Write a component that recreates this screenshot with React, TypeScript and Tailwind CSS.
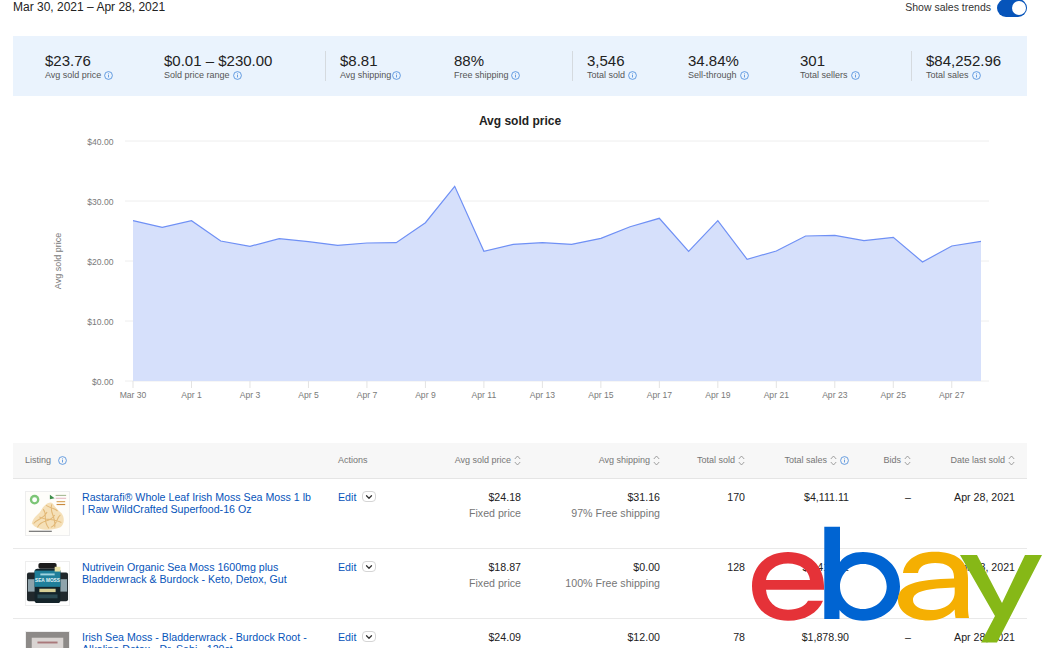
import React from 'react';
import { ChevronDown } from 'lucide-react';

const InfoIcon = ({ size = 10 }: { size?: number }) => (
  <svg width={size} height={size} viewBox="0 0 12 12" className="inline-block shrink-0" fill="none">
    <circle cx="6" cy="6" r="5.2" stroke="#3b82d8" strokeWidth="1" />
    <rect x="5.5" y="5" width="1" height="3.6" fill="#3b82d8" />
    <rect x="5.5" y="3.2" width="1" height="1" fill="#3b82d8" />
  </svg>
);

const SortIcon = () => (
  <svg width="7" height="11" viewBox="0 0 7 11" className="inline-block shrink-0" fill="none" stroke="#8a8a8a" strokeWidth="0.8">
    <path d="M0.8 4 L3.5 1 L6.2 4" />
    <path d="M0.8 7 L3.5 10 L6.2 7" />
  </svg>
);

const stats = [
  { value: '$23.76', label: 'Avg sold price', width: 'w-[119px]', gap: 'gap-[3px]' },
  { value: '$0.01 – $230.00', label: 'Sold price range', width: 'w-[176px]', gap: 'gap-[3px]' },
  { value: '$8.81', label: 'Avg shipping', width: 'w-[114px]', gap: 'gap-[1px]', divider: true },
  { value: '88%', label: 'Free shipping', width: 'w-[133px]', gap: 'gap-[2px]' },
  { value: '3,546', label: 'Total sold', width: 'w-[101px]', gap: 'gap-[3px]', divider: true },
  { value: '34.84%', label: 'Sell-through', width: 'w-[112px]', gap: 'gap-[3px]' },
  { value: '301', label: 'Total sellers', width: 'w-[126px]', gap: 'gap-[3px]' },
  { value: '$84,252.96', label: 'Total sales', width: 'w-[90px]', gap: 'gap-[3px]', divider: true },
];

const prices = [
  220.7, 227.3, 220.7, 241, 246.3, 238.7, 241.7, 245.3, 243, 242.7, 222.7, 186.3, 251.3, 244.3, 242.7,
  244.3, 238.3, 226.7, 218.3, 251.3, 220.7, 259.3, 251, 236, 235.3, 240.7, 237.3, 262, 246, 241.3,
];
const xAt = (i: number) => 133 + (i * 848) / 29;
const linePoints = prices.map((y, i) => `${xAt(i).toFixed(1)},${y}`).join(' ');
const xLabels = ['Mar 30', 'Apr 1', 'Apr 3', 'Apr 5', 'Apr 7', 'Apr 9', 'Apr 11', 'Apr 13', 'Apr 15', 'Apr 17', 'Apr 19', 'Apr 21', 'Apr 23', 'Apr 25', 'Apr 27'];
const yTicks = [
  { y: 141, label: '$40.00' },
  { y: 201, label: '$30.00' },
  { y: 261, label: '$20.00' },
  { y: 321, label: '$10.00' },
  { y: 381, label: '$0.00' },
];

const Chart = () => (
  <svg viewBox="0 96 1046 320" className="block h-[320px] w-[1046px]" fontFamily="'Liberation Sans', Arial, sans-serif">
    <text x="520" y="124.5" textAnchor="middle" fontSize="12" fontWeight="700" fill="#222">Avg sold price</text>
    {yTicks.map((t) => (
      <g key={t.label}>
        <line x1="125" x2="989" y1={t.y} y2={t.y} stroke="#eeeeee" strokeWidth="1" />
        <text x="113.5" y={t.y + 3.5} textAnchor="end" fontSize="8.6" fill="#7a7a7a">{t.label}</text>
      </g>
    ))}
    <polygon points={`133,381 ${linePoints} 981,381`} fill="#d6e0fb" />
    <polyline points={linePoints} fill="none" stroke="#6f90f5" strokeWidth="1.2" />
    {xLabels.map((label, i) => {
      const x = xAt(i * 2);
      return (
        <g key={label}>
          <line x1={x} x2={x} y1="381" y2="388" stroke="#e3e3e3" strokeWidth="1" />
          <text x={x} y="398" textAnchor="middle" fontSize="8.6" fill="#7a7a7a">{label}</text>
        </g>
      );
    })}
    <text transform="translate(61 261) rotate(-90)" textAnchor="middle" fontSize="9" fill="#7a7a7a">Avg sold price</text>
  </svg>
);

const MossThumb = () => (
  <svg viewBox="0 0 45 45" className="h-[45px] w-[45px] shrink-0 border border-[#eeeeee]">
    <rect width="45" height="45" fill="#fefdfa" />
    <circle cx="9" cy="8" r="5" fill="#7cc576" />
    <circle cx="9" cy="8" r="2.6" fill="#fff" />
    <path d="M25 3 L30 6.5 L25 7.5 Z" fill="#3e8d4a" />
    <rect x="31" y="3" width="11" height="1.2" fill="#a9bd98" />
    <rect x="31" y="6" width="11" height="1.2" fill="#e8bcc6" />
    <rect x="32" y="9.5" width="9" height="1.2" fill="#d9a65c" />
    <rect x="32" y="12.5" width="9" height="1.2" fill="#c98a3e" />
    <path d="M6 33 C8 25 14 24 17 17 C20 13 25 9 28 12 C31 16 33 19 37 22 C41 27 40 34 36 37 C27 41 12 41 6 33 Z" fill="#f5e0b8" />
    <path
      d="M8 33 C13 27 18 29 22 21 M12 37 C16 28 25 33 30 24 M18 18 C23 24 17 30 24 38 M27 13 C24 22 32 26 30 37 M36 24 C31 28 34 33 26 37 M14 26 C20 30 27 27 37 32 M21 14 C27 18 30 16 33 20"
      stroke="#e2b877"
      strokeWidth="1.1"
      fill="none"
    />
    <rect x="3" y="40.5" width="24" height="1.3" fill="#777" />
  </svg>
);

const BottleThumb = () => (
  <svg viewBox="0 0 45 45" className="h-[45px] w-[45px] shrink-0 border border-[#eeeeee]">
    <rect width="45" height="45" fill="#fff" />
    <rect x="1" y="11" width="11" height="30" rx="2" fill="#20282c" />
    <rect x="33" y="11" width="11" height="30" rx="2" fill="#20282c" />
    <rect x="2" y="18" width="9" height="13" fill="#8fa3ab" />
    <rect x="34" y="18" width="9" height="13" fill="#8fa3ab" />
    <rect x="13" y="1" width="19" height="6" rx="2" fill="#1c1c1c" />
    <rect x="9" y="7" width="27" height="36" rx="3" fill="#14242a" />
    <rect x="9" y="9" width="27" height="17" fill="#1f7f9a" />
    <text x="22.5" y="21" textAnchor="middle" fontSize="5" fontWeight="700" fill="#e4f4f7" fontFamily="'Liberation Sans', Arial, sans-serif">SEA MOSS</text>
    <rect x="15" y="12" width="15" height="2" fill="#9fd3df" />
    <rect x="14" y="28" width="17" height="3.5" fill="#d5cf95" />
    <rect x="12" y="34" width="21" height="4" fill="#2a4a52" />
    <rect x="30" y="5" width="6" height="5" fill="#e8e2a8" />
  </svg>
);

const SackThumb = () => (
  <svg viewBox="0 0 45 45" className="h-[45px] w-[45px] shrink-0 border border-[#eeeeee]">
    <rect width="45" height="45" fill="#8d8a88" />
    <rect x="6" y="6" width="33" height="39" fill="#d9d4d2" />
    <rect x="12" y="10" width="21" height="2" fill="#a9787a" />
  </svg>
);

const rows = [
  {
    thumb: <MossThumb />,
    title: 'Rastarafi® Whole Leaf Irish Moss Sea Moss 1 lb | Raw WildCrafted Superfood-16 Oz',
    price: '$24.18',
    shipping: '$31.16',
    free: '97% Free shipping',
    sold: '170',
    sales: '$4,111.11',
    date: 'Apr 28, 2021',
  },
  {
    thumb: <BottleThumb />,
    title: 'Nutrivein Organic Sea Moss 1600mg plus Bladderwrack & Burdock - Keto, Detox, Gut',
    price: '$18.87',
    shipping: '$0.00',
    free: '100% Free shipping',
    sold: '128',
    sales: '$3,411.12',
    date: 'Apr 28, 2021',
  },
  {
    thumb: <SackThumb />,
    title: 'Irish Sea Moss - Bladderwrack - Burdock Root - Alkaline Detox - Dr. Sebi - 120ct',
    price: '$24.09',
    shipping: '$12.00',
    free: '0% Free shipping',
    sold: '78',
    sales: '$1,878.90',
    date: 'Apr 28, 2021',
  },
];

const gridCols = 'grid grid-cols-[325px_92px_91px_139px_85px_104px_62px_104px] pr-[12px]';

const EbayLogo = () => (
  <svg viewBox="752 526 290 117" className="absolute left-[752px] top-[526px] h-[117px] w-[290px]">
    <path
      fillRule="evenodd"
      fill="#e53238"
      d="M824 589.7 V586 C824 566 810 552 788 552 C766 552 752 567 752 586 C752 606 766 620.7 788 620.7 C805 620.7 818 613 823 600.7 H808 C805 606 798 609.7 788 609.7 C775 609.7 767 601 766 589.7 Z M766 580 C767 571 776 563.5 788 563.5 C800 563.5 809 570 810 580 Z"
    />
    <path
      fillRule="evenodd"
      fill="#0064d2"
      d="M824.3 526.7 H840 V562 C845 555 853 552 863 552 C885 552 900 567 900 586.5 C900 606 885 620.7 863 620.7 C853 620.7 845 617 839.5 610 V619 H824.3 Z M863 564 C850 564 840 574 840 586.5 C840 599 850 609 863 609 C876 609 886.7 599 886.7 586.5 C886.7 574 876 564 863 564 Z"
    />
    <path
      fillRule="evenodd"
      fill="#f5af02"
      d="M903 573 C905 559 918 551.7 935 551.7 C956 551.7 968 561 968 578 V608 C968 612 968.5 615 969 618 H955.5 C955 615 954.7 612 954.7 609.5 C949 616 940 620.5 929 620.5 C911 620.5 898 612 898 600 C898 584 916 579.5 954 578.5 V577 C954 567.5 947 563 935 563 C925 563 919 566.5 918 573 Z M954.7 587.5 C928 588.5 913 591 913 600 C913 606 920 610 931 610 C945 610 954.7 603 954.7 592 Z"
    />
    <path fill="#86b817" d="M960 555 H977 L1002 603 L1025 555 H1042 L997 642.5 H981 L995 616 Z" />
  </svg>
);

export default function App() {
  return (
    <div className="relative h-[648px] w-[1046px] overflow-hidden bg-white font-['Liberation_Sans',Arial,sans-serif] text-[#222]">
      <div className="flex h-[36px] items-start justify-between pl-[13px] pr-[19px]">
        <span className="text-[12px] leading-[15px]">Mar 30, 2021 – Apr 28, 2021</span>
        <div className="flex items-start gap-[6px]">
          <span className="text-[10.5px] leading-[15px] text-[#333]">Show sales trends</span>
          <div className="mt-[-1px] flex h-[18px] w-[30px] items-center justify-end rounded-full bg-[#0654ba] pr-[1.5px]">
            <div className="h-[14px] w-[14px] rounded-full bg-white" />
          </div>
        </div>
      </div>

      <div className="mx-[13px] flex h-[60px] w-[1014px] items-center bg-[#eaf3fd] pl-[32px]">
        {stats.map((s) => (
          <div key={s.label} className={`flex h-[30px] items-center ${s.width}`}>
            {s.divider && <div className="ml-[-15px] mr-[14px] h-[30px] w-px bg-[#d5dadf]" />}
            <div>
              <div className="text-[15px] leading-[17px] text-[#222]">{s.value}</div>
              <div className={`mt-px flex items-center text-[9px] leading-[11px] text-[#555] ${s.gap}`}>
                {s.label}
                <InfoIcon size={9} />
              </div>
            </div>
          </div>
        ))}
      </div>

      <Chart />

      <div className="mx-[13px] mt-[27px] w-[1014px]">
        <div className={`${gridCols} h-[36px] items-center border-b border-[#e5e5e5] bg-[#f7f7f7] text-[9px] text-[#767676]`}>
          <div className="flex items-center gap-[7px] pl-[12px]">
            Listing <InfoIcon size={9} />
          </div>
          <div>Actions</div>
          {['Avg sold price', 'Avg shipping', 'Total sold'].map((h) => (
            <div key={h} className="flex items-center justify-end gap-[3px]">
              {h} <SortIcon />
            </div>
          ))}
          <div className="flex items-center justify-end gap-[3px]">
            Total sales <SortIcon /> <InfoIcon size={9} />
          </div>
          {['Bids', 'Date last sold'].map((h) => (
            <div key={h} className="flex items-center justify-end gap-[3px]">
              {h} <SortIcon />
            </div>
          ))}
        </div>

        {rows.map((r) => (
          <div key={r.price} className={`${gridCols} h-[70px] border-b border-[#e9e9e9] pt-[12px] text-[10.65px] leading-[12px]`}>
            <div className="flex gap-[12px] pl-[12px]">
              {r.thumb}
              <a className="w-[231px] text-[#0654ba]">{r.title}</a>
            </div>
            <div className="flex items-start gap-[6px]">
              <span className="text-[#0654ba]">Edit</span>
              <span className="flex h-[11px] w-[14px] items-center justify-center rounded-[4px] border border-[#d5d5d5]">
                <ChevronDown size={10} strokeWidth={3} className="text-[#333]" />
              </span>
            </div>
            <div className="text-right">
              <div>{r.price}</div>
              <div className="mt-[4px] text-[#767676]">Fixed price</div>
            </div>
            <div className="text-right">
              <div>{r.shipping}</div>
              <div className="mt-[4px] text-[#767676]">{r.free}</div>
            </div>
            <div className="text-right">{r.sold}</div>
            <div className="text-right">{r.sales}</div>
            <div className="text-right">–</div>
            <div className="text-right">{r.date}</div>
          </div>
        ))}
      </div>

      <EbayLogo />
    </div>
  );
}
